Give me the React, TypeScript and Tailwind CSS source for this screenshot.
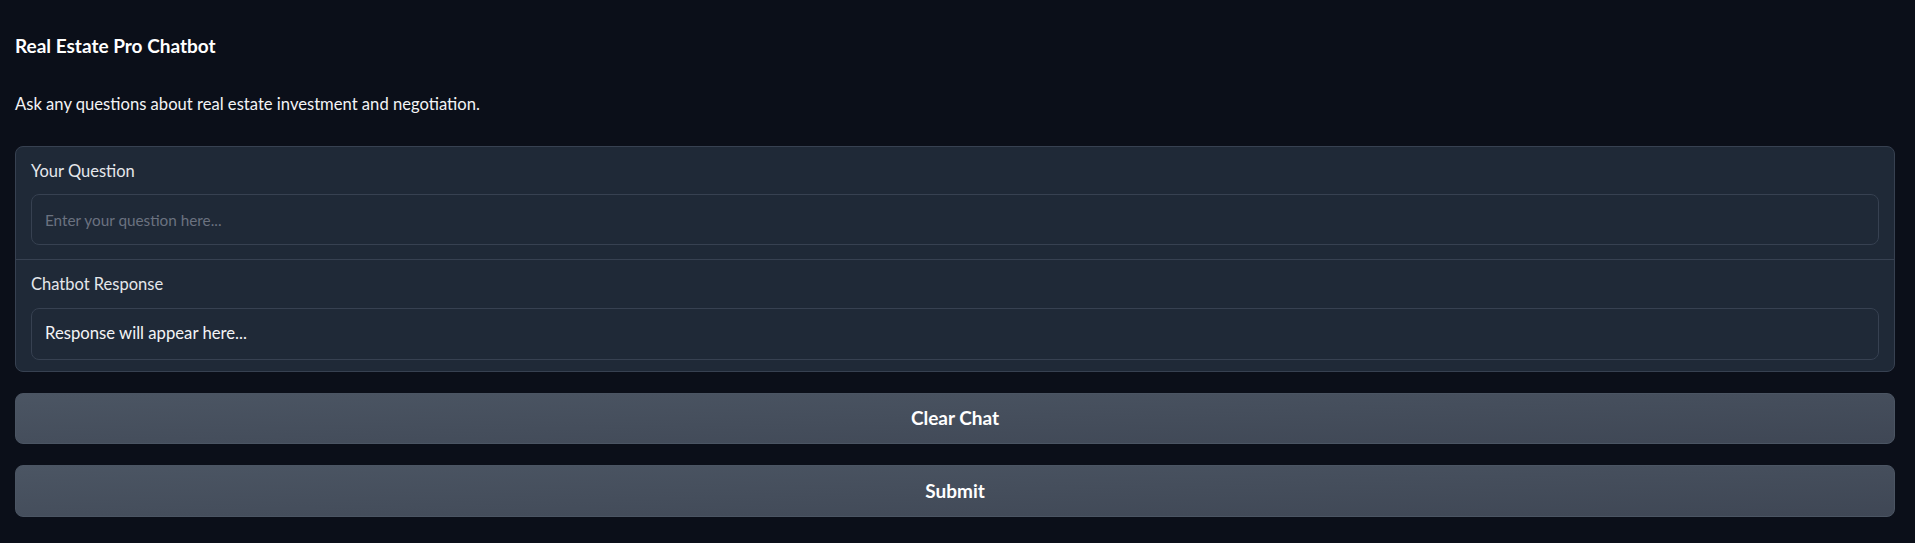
export default function App() {
  return (
    <div className="min-h-screen bg-[#0b0f19] pl-[15px] pr-[20px] pt-[34px] pb-6 text-[#f3f4f6] [font-family:Lato,sans-serif]">
      {/* Header */}
      <h3 className="text-[19px] leading-6 font-bold text-white">Real Estate Pro Chatbot</h3>
      <p className="mt-[34px] text-[16.6px] leading-6">
        Ask any questions about real estate investment and negotiation.
      </p>

      {/* Form */}
      <div className="mt-[30px] rounded-lg border border-[#374151] bg-[#1f2937] overflow-hidden">
        <div className="px-[15px] pt-3 pb-[14px]">
          <label className="block text-[16.5px] leading-6 text-[#e5e7eb]">Your Question</label>
          <input
            type="text"
            placeholder="Enter your question here..."
            className="mt-[11px] block w-full h-[51px] rounded-lg border border-[#374151] bg-[#1f2937] px-[13px] text-[15.3px] text-[#f3f4f6] outline-none placeholder:text-[#6b7280]"
          />
        </div>
        <div className="border-t border-[#374151] px-[15px] pt-3 pb-[11px]">
          <label className="block text-[16.5px] leading-6 text-[#e5e7eb]">Chatbot Response</label>
          <div className="mt-3 flex items-center h-[52px] rounded-lg border border-[#374151] bg-[#1f2937] px-[13px] text-[16.7px] text-[#f3f4f6]">
            Response will appear here...
          </div>
        </div>
      </div>

      {/* Actions */}
      <div className="mt-[21px] flex flex-col gap-[21px]">
        <button className="h-[51px] w-full rounded-lg border border-[#4b5563] bg-gradient-to-br from-[#4b5563] to-[#3f4755] text-[19px] font-bold text-white">
          Clear Chat
        </button>
        <button className="h-[52px] w-full rounded-lg border border-[#4b5563] bg-gradient-to-br from-[#4b5563] to-[#3f4755] text-[19px] font-bold text-white">
          Submit
        </button>
      </div>
    </div>
  );
}
